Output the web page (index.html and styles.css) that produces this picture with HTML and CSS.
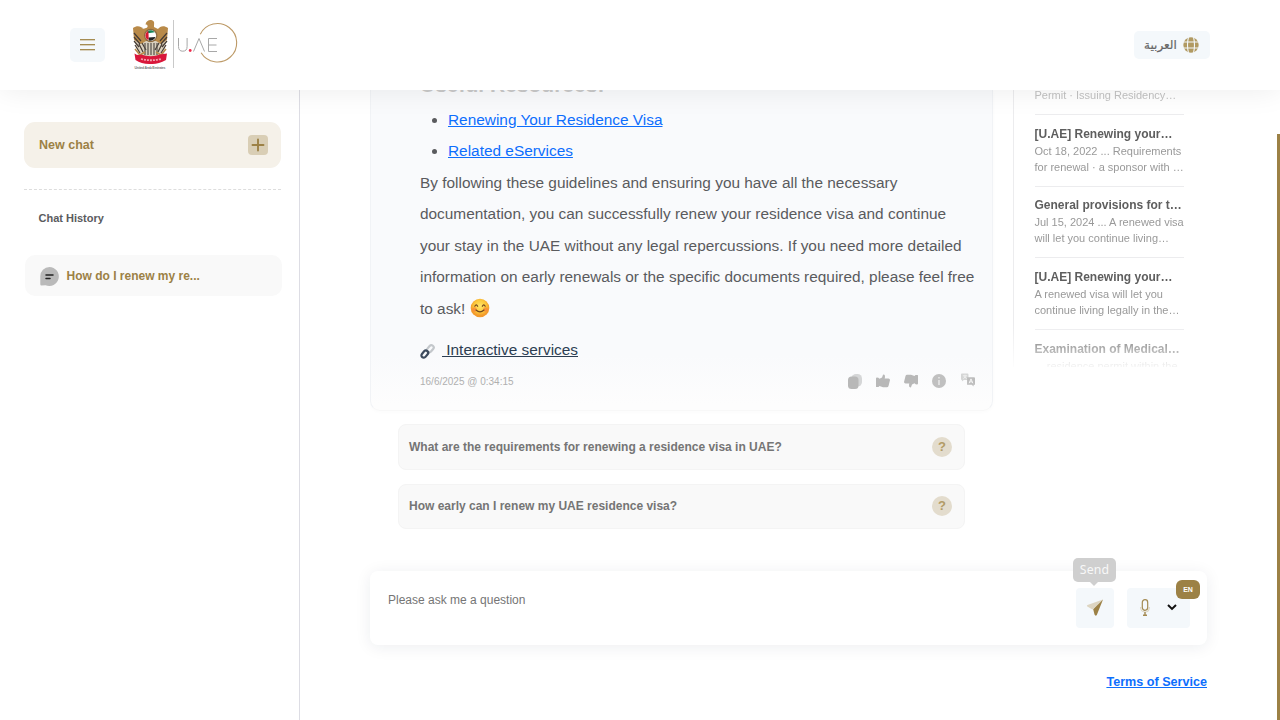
FILE: index.html
```html
<!DOCTYPE html>
<html lang="en">
<head>
<meta charset="utf-8">
<title>U.AE Chat</title>
<link rel="stylesheet" href="styles.css">
</head>
<body>
<header class="header">
  <div class="brand">
    <button class="menu" aria-label="Menu"><i></i><i></i><i></i></button>
    <svg class="logo" width="106" height="52" viewBox="0 0 106 52">
      <g class="emblem">
        <path d="M2 10L10 8L13 11L16 9L15 6L14 5L17 2L21 3L21 8L25 11L29 8L35 10L34 22L32 35L28 40H10L6 35L3 22Z" fill="#d8cfbd"/>
        <path d="M1 9C5 6 9 7 11 10L14 9C17 8 16 5 13.500 5.500C14 2 17 .5 20 1.200C23 2 22 5 22 8L26 10C28 7 32 6 36 9L35 21L29 25L24 22H14L9 25L2 21Z" fill="#b98a49"/>
        <path d="M2 14L9 22M2 18L8 25M2 22L7 28M35 14L28 22M35 18L29 25M35 22L30 28M3 26L8 34M7 25L11 33M10 24L14 31M34 26L29 34M30 25L26 33M27 24L23 31" stroke="#453b34" stroke-width="1.200" fill="none"/>
        <path d="M13 24V36M16 24V36M19 24V36M22 24V36M25 24V36" stroke="#55504a" stroke-width="1.200"/>
        <path d="M3 30L8 36L13 33M34 30L29 36L24 33" stroke="#b98a49" stroke-width="1.500" fill="none"/>
        <circle cx="18.700" cy="16.500" r="6.700" fill="#8b6b42"/>
        <circle cx="18.700" cy="16.500" r="5.400" fill="#fff"/>
        <path d="M15.500 12.200A5.400 5.400 0 0 1 22.800 13.300L16 14.300Z" fill="#158558"/>
        <path d="M15.500 12.200A5.400 5.400 0 0 0 15.500 20.800L16.800 20.500L16.300 12Z" fill="#d71932"/>
        <path d="M16.700 18.500L23.500 18A5.400 5.400 0 0 1 16.800 21.500Z" fill="#222"/>
        <path d="M2.500 34.500Q6 37 9 35.500Q19 39 28 35.500L35 34.500L34 41Q26 45.500 19 45Q10 45.500 3.500 41Z" fill="#d9173b"/>
        <path d="M9 40Q19 42.500 29 40" stroke="#f3a3ae" stroke-width="1.800" stroke-dasharray="2 1" fill="none"/>
        <text class="emblem-name" x="2.500" y="50" textLength="31">United Arab Emirates</text>
      </g>
      <path d="M41.500 1V49" stroke="#c9c9c9"/>
      <g fill="none" stroke="#a8a8a8">
        <path d="M46.500 19V27.500Q46.500 32.200 50.800 32.200Q55.100 32.200 55.100 27.500V19"/>
        <path d="M61.500 32.500L67 19.500L72.500 32.500M85 19.500H76.500V32.500H85M76.500 26H84.500"/>
      </g>
      <circle cx="58.200" cy="31.500" r="1.400" fill="#ef2b4b"/>
      <path d="M68.300 15.200A19.200 19.200 0 1 1 69.100 33.800" fill="none" stroke="#bd9a67" stroke-width="1.100"/>
    </svg>
  </div>
  <button class="language">
    <span lang="ar">العربية</span>
    <svg width="16" height="16" viewBox="0 0 16 16"><circle cx="8" cy="8" r="7.700" fill="#b19a62"/><path d="M0 5H16M0 11H16M5.500 0Q3.500 8 5.500 16M10.500 0Q12.500 8 10.500 16" fill="none" stroke="#f3f8fb" stroke-width="1.100"/></svg>
  </button>
</header>
<div class="body">
  <aside class="sidebar">
    <button class="new-chat">New chat
      <svg width="20" height="20" viewBox="0 0 20 20"><rect width="20" height="20" rx="4" fill="#d9ceb5"/><path d="M4.500 10H15.500M10 4.500V15.500" stroke="#9c8145" stroke-width="1.900" stroke-linecap="round"/></svg>
    </button>
    <h2 class="history-title">Chat History</h2>
    <div class="history-item">
      <svg width="19" height="19" viewBox="0 0 19 19"><path d="M9.500 0A9.500 9.500 0 1 1 5.500 18.200L1.500 18.600Q.2 18.700 .3 17V9.500A9.300 9.300 0 0 1 9.500 0Z" fill="#bababa"/><path d="M6 8H13M6 11.500H10" stroke="#222" stroke-width="1.500" stroke-linecap="round"/></svg>
      <span>How do I renew my re...</span>
    </div>
  </aside>
  <main class="main">
    <div class="conversation">
      <section class="thread">
        <article class="answer">
          <h3 class="answer-heading">Useful Resources:</h3>
          <ul class="resources">
            <li><a href="#">Renewing Your Residence Visa</a></li>
            <li><a href="#">Related eServices</a></li>
          </ul>
          <p class="answer-text">By following these guidelines and ensuring you have all the necessary<br>documentation, you can successfully renew your residence visa and continue<br>your stay in the UAE without any legal repercussions. If you need more detailed<br>information on early renewals or the specific documents required, please feel free<br>to ask! <svg class="smile" width="20" height="20" viewBox="0 0 20 20"><defs><radialGradient id="face" cx=".5" cy=".4"><stop offset="0" stop-color="#ffe66b"/><stop offset=".65" stop-color="#fcc83b"/><stop offset="1" stop-color="#f39a2c"/></radialGradient></defs><circle cx="10" cy="10" r="9.300" fill="url(#face)"/><circle cx="4.500" cy="11.500" r="2.300" fill="#f7773b" opacity=".6"/><circle cx="15.500" cy="11.500" r="2.300" fill="#f7773b" opacity=".6"/><path d="M4.800 8.300Q6.200 5.500 7.700 8.300M12.300 8.300Q13.800 5.500 15.200 8.300M6 12Q10 15.800 14 12" fill="none" stroke="#6f431e" stroke-width="1.100" stroke-linecap="round"/></svg></p>
          <div class="services">
            <svg width="16" height="16" viewBox="0 0 16 16" fill="none" stroke-width="2.200" stroke-linecap="round"><rect x="6.300" y="3.500" width="8" height="4.600" rx="2.300" transform="rotate(-50 10.300 5.800)" stroke="#c3c7cb"/><rect x=".8" y="8.800" width="8" height="4.600" rx="2.300" transform="rotate(-50 4.800 11.100)" stroke="#3d4b5e"/></svg>
            <a href="#">&nbsp;Interactive services</a>
          </div>
          <footer class="answer-footer">
            <time>16/6/2025 @ 0:34:15</time>
            <div class="actions">
              <svg width="14" height="15" viewBox="0 0 14 15"><rect x="3.500" width="10.500" height="12.500" rx="4.500" fill="#d5d6d7"/><rect y="2.500" width="10.500" height="12.500" rx="3.500" fill="#b8b8b8"/></svg>
              <svg width="14" height="14" viewBox="0 0 14 14" fill="#b8b8b8"><path d="M0 4.500Q0 3.500 1 3.500Q2.500 3.500 3.500 4.800L6 3.500L7 .7Q9.200 .2 9 3L8.700 4.500H12.500Q14 4.600 14 6L12.500 12Q12.200 13.300 10.800 13.300H7L3.500 12L2.500 13H.5Q0 13 0 12.500Z"/></svg>
              <svg width="14" height="14" viewBox="0 0 14 14" fill="#b8b8b8"><path transform="rotate(180 7 7)" d="M0 4.500Q0 3.500 1 3.500Q2.500 3.500 3.500 4.800L6 3.500L7 .7Q9.200 .2 9 3L8.700 4.500H12.500Q14 4.600 14 6L12.500 12Q12.200 13.300 10.800 13.300H7L3.500 12L2.500 13H.5Q0 13 0 12.500Z"/></svg>
              <svg width="14" height="14" viewBox="0 0 14 14"><circle cx="7" cy="7" r="7" fill="#c0c0c0"/><path d="M7 6V11M7 3V4.500" stroke="#ececec" stroke-width="1.400"/></svg>
              <svg class="translate" width="14" height="14" viewBox="0 0 15 14"><path d="M1 0H7Q8 0 8 1V7H3L1 8.500V7Q0 7 0 6V1Q0 0 1 0Z" fill="#d5d6d6"/><path d="M2 2.500H6.500M4.300 1.300V2.500M2.500 5.500L5.500 3M3 3L6 5.500" stroke="#f5f5f5" stroke-width=".8"/><path d="M6.500 4H14Q15 4 15 5V12H13.500V14L11.500 12H6.500Z" fill="#bdbdbd"/><path d="M8.700 10.500L10.700 5.800L12.700 10.500M9.300 9H12" stroke="#fafafa" fill="none"/></svg>
            </div>
          </footer>
        </article>
        <div class="suggestions">
          <button class="suggestion first">What are the requirements for renewing a residence visa in UAE?<b>?</b></button>
          <button class="suggestion second">How early can I renew my UAE residence visa?<b>?</b></button>
        </div>
      </section>
      <aside class="sources">
        <article><p>Permit · Issuing Residency…</p></article>
        <article><h4>[U.AE] Renewing your…</h4><p>Oct 18, 2022 ... Requirements<br>for renewal · a sponsor with …</p></article>
        <article><h4>General provisions for t…</h4><p>Jul 15, 2024 ... A renewed visa<br>will let you continue living…</p></article>
        <article><h4>[U.AE] Renewing your…</h4><p>A renewed visa will let you<br>continue living legally in the…</p></article>
        <article><h4>Examination of Medical…</h4><p>... residence permit within the</p></article>
      </aside>
    </div>
    <div class="composer">
      <span class="placeholder">Please ask me a question</span>
      <button class="send" aria-label="Send">
        <span class="tooltip">Send</span>
        <svg width="18" height="18" viewBox="0 0 18 18"><path d="M17 .5L1.500 6Q.3 6.500 1.300 7.600L6.500 10.500Z" fill="#ddd5c1"/><path d="M17 .5L7.200 10.300L8.500 15.500Q9.500 17.500 10.800 16Z" fill="#9c8145"/></svg>
      </button>
      <button class="voice" aria-label="Voice input">
        <span class="locale">EN</span>
        <svg width="10" height="18" viewBox="0 0 10 18" fill="none"><path d="M.6 8Q.6 13 5 13Q9.400 13 9.400 8" stroke="#ddd5c1" stroke-width="1.100"/><rect x="2.300" y=".7" width="5.400" height="10.600" rx="2.700" stroke="#a38a52" stroke-width="1.200"/><path d="M5 13V16M3 16.300H7" stroke="#a38a52" stroke-width="1.400"/></svg>
        <svg class="chevron" width="10" height="7" viewBox="0 0 10 7"><path d="M1 1L5 4.900L9 1" fill="none" stroke="#111" stroke-width="2"/></svg>
      </button>
    </div>
    <div class="terms"><a href="#">Terms of Service</a></div>
  </main>
  <div class="scrollbar"></div>
</div>
</body>
</html>
```
FILE: styles.css
```css
* { box-sizing: border-box; }
body { margin: 0; width: 1280px; height: 720px; overflow: hidden; background: #fff; font-family: "Liberation Sans", Arial, sans-serif; color: #5a5b5e; display: flex; flex-direction: column; }
button { border: 0; padding: 0; margin: 0; font: inherit; color: inherit; background: none; text-align: left; }
h2, h3, h4, p, ul { margin: 0; padding: 0; }
svg { flex: none; display: block; }
.header { height: 90px; flex: none; background: #fff; display: flex; justify-content: space-between; align-items: center; padding: 0 70px; box-shadow: 0 0 30px rgba(0,0,0,.08); position: relative; z-index: 2; }
.brand { display: flex; align-items: center; gap: 26.500px; }
.menu { width: 35px; height: 34px; background: #f4f8fb; border-radius: 5px; display: flex; flex-direction: column; align-items: center; justify-content: center; gap: 4px; padding-bottom: 1px; }
.menu i { width: 15px; height: 1px; background: #a58c52; box-shadow: 0 1px rgba(165,140,82,.35); }
.emblem-name { font: bold 3.500px "Liberation Sans", sans-serif; fill: #777; }
.language { width: 76px; height: 28px; background: #f4f8fb; border-radius: 5px; display: flex; align-items: center; justify-content: space-between; padding: 0 11px 0 10px; font: 12px "DejaVu Sans", sans-serif; color: #666; }
.language span { -webkit-text-stroke: .2px #666; }
.body { flex: 1; display: flex; min-height: 0; overflow: hidden; }
.sidebar { width: 300px; flex: none; border-right: 1px solid #dddde4; padding: 32px 17px 0 24px; }
.new-chat { width: 257px; height: 46px; background: #f5f1e9; border-radius: 11px; display: flex; align-items: center; justify-content: space-between; padding: 0 13px 0 15px; color: #9c8145; font-size: 12.500px; font-weight: bold; }
.history-title { margin: 21px 0 0; padding: 22px 0 0 14.500px; width: 257px; font-size: 11px; line-height: 13px; border-top: 1px dashed #ddd; }
.history-item { margin: 30px 0 0 1px; width: 257px; height: 41px; background: #f9f9f9; border-radius: 10px; display: flex; align-items: center; gap: 7.500px; padding: 0 15px; color: #9c8145; font-size: 12px; font-weight: bold; }
.history-item svg { margin-top: 1px; }
.main { flex: 1; padding-left: 70px; min-width: 0; display: flex; flex-direction: column; }
.conversation { height: 481px; flex: none; display: flex; gap: 20px; overflow: hidden; }
.thread { width: 623px; }
.answer { height: 321px; background: linear-gradient(#f9fafc 0, #f9fafc 265px, #fdfdfd 315px); border: 1px solid #f1f3f6; border-top: 0; border-bottom-color: #f8f8f8; border-radius: 0 0 10px 10px; padding-left: 49px; font-size: 15.400px; line-height: 31.450px; white-space: nowrap; box-shadow: 0 1px 4px rgba(0,0,0,.02); }
.answer-heading { font-size: 21px; line-height: 24px; height: 14px; display: flex; align-items: flex-end; padding-bottom: 7px; color: #c9c9c9; }
.resources { padding-left: 28px; }
.resources a { text-underline-offset: 1px; }
.resources a, .terms a { color: #0d6efd; }
.smile { display: inline-block; vertical-align: -4px; }
.services { display: flex; align-items: center; gap: 6px; margin-top: 10px; }
.services a { color: #2c3e52; }
.services svg { margin-top: 3px; }
.answer-footer { display: flex; justify-content: space-between; align-items: center; padding-right: 17px; font-size: 10px; color: #b0b0b0; }
.actions { display: flex; align-items: center; gap: 14px; }
.actions .translate { margin: -3px 0 0 1px; }
.suggestions { display: flex; flex-direction: column; gap: 14px; padding: 13px 28px 0; }
.suggestion { height: 45px; border: 1px solid #f4f4f4; background: #f9f9f9; border-radius: 8px; padding: 0 12px 0 10px; display: flex; align-items: center; justify-content: space-between; color: #757575; font-size: 12px; font-weight: bold; white-space: nowrap; }
.suggestion.first { height: 46px; }
.suggestion.second { padding-bottom: 1px; }
.suggestion b { width: 20px; height: 20px; border-radius: 50%; background: #e3dccd; color: #b29b65; font-size: 13px; line-height: 20px; text-align: center; }
.sources { width: 171px; height: 277px; overflow: hidden; padding-left: 20.500px; border-left: 1px solid #ececee; white-space: nowrap; -webkit-mask-image: linear-gradient(#000 235px, transparent 282px); mask-image: linear-gradient(#000 235px, transparent 282px); }
.sources article { height: 71.700px; padding-top: 10.500px; border-bottom: 1px solid #ececee; }
.sources article:first-child { height: 28px; padding: 0; margin-top: -3px; }
.sources article:first-child p { color: #c2c2c2; }
.sources h4 { font-size: 12px; line-height: 17px; color: #5e5e5e; }
.sources p { font-size: 11px; line-height: 16px; color: #999; }
.composer { width: 837px; height: 74px; background: #fff; border-radius: 8px; box-shadow: 0 2px 16px rgba(30,40,60,.08); display: flex; padding: 17px 17px 0 18px; }
.placeholder { flex: 1; font-size: 12px; line-height: 24px; color: #757575; }
.send, .voice { position: relative; height: 40px; background: #f4f8fb; border-radius: 4px; display: flex; align-items: center; }
.send { width: 38px; justify-content: center; margin-right: 13px; }
.voice { width: 63px; padding-left: 13px; gap: 17px; }
.chevron { margin-top: -1px; }
.tooltip { position: absolute; left: -3px; top: -30px; width: 43px; height: 24px; background: #cfcfcf; border-radius: 5px; color: #f8f8f8; font: 12.300px/23px "Noto Sans", sans-serif; letter-spacing: .15px; text-align: center; }
.tooltip::after { content: ""; position: absolute; left: 17px; top: 24px; border: 4px solid transparent; border-top-color: #cfcfcf; border-bottom: 0; }
.locale { position: absolute; right: -10px; top: -8px; width: 24px; height: 19px; border-radius: 6px; background: #9c8145; color: #fff; font-size: 7px; line-height: 19px; text-align: center; font-weight: bold; }
.terms { width: 837px; padding-top: 30px; text-align: right; font-size: 12.600px; line-height: 15px; font-weight: bold; }
.scrollbar { width: 3px; height: 586px; margin-top: 44px; background: #9c8145; }
```
